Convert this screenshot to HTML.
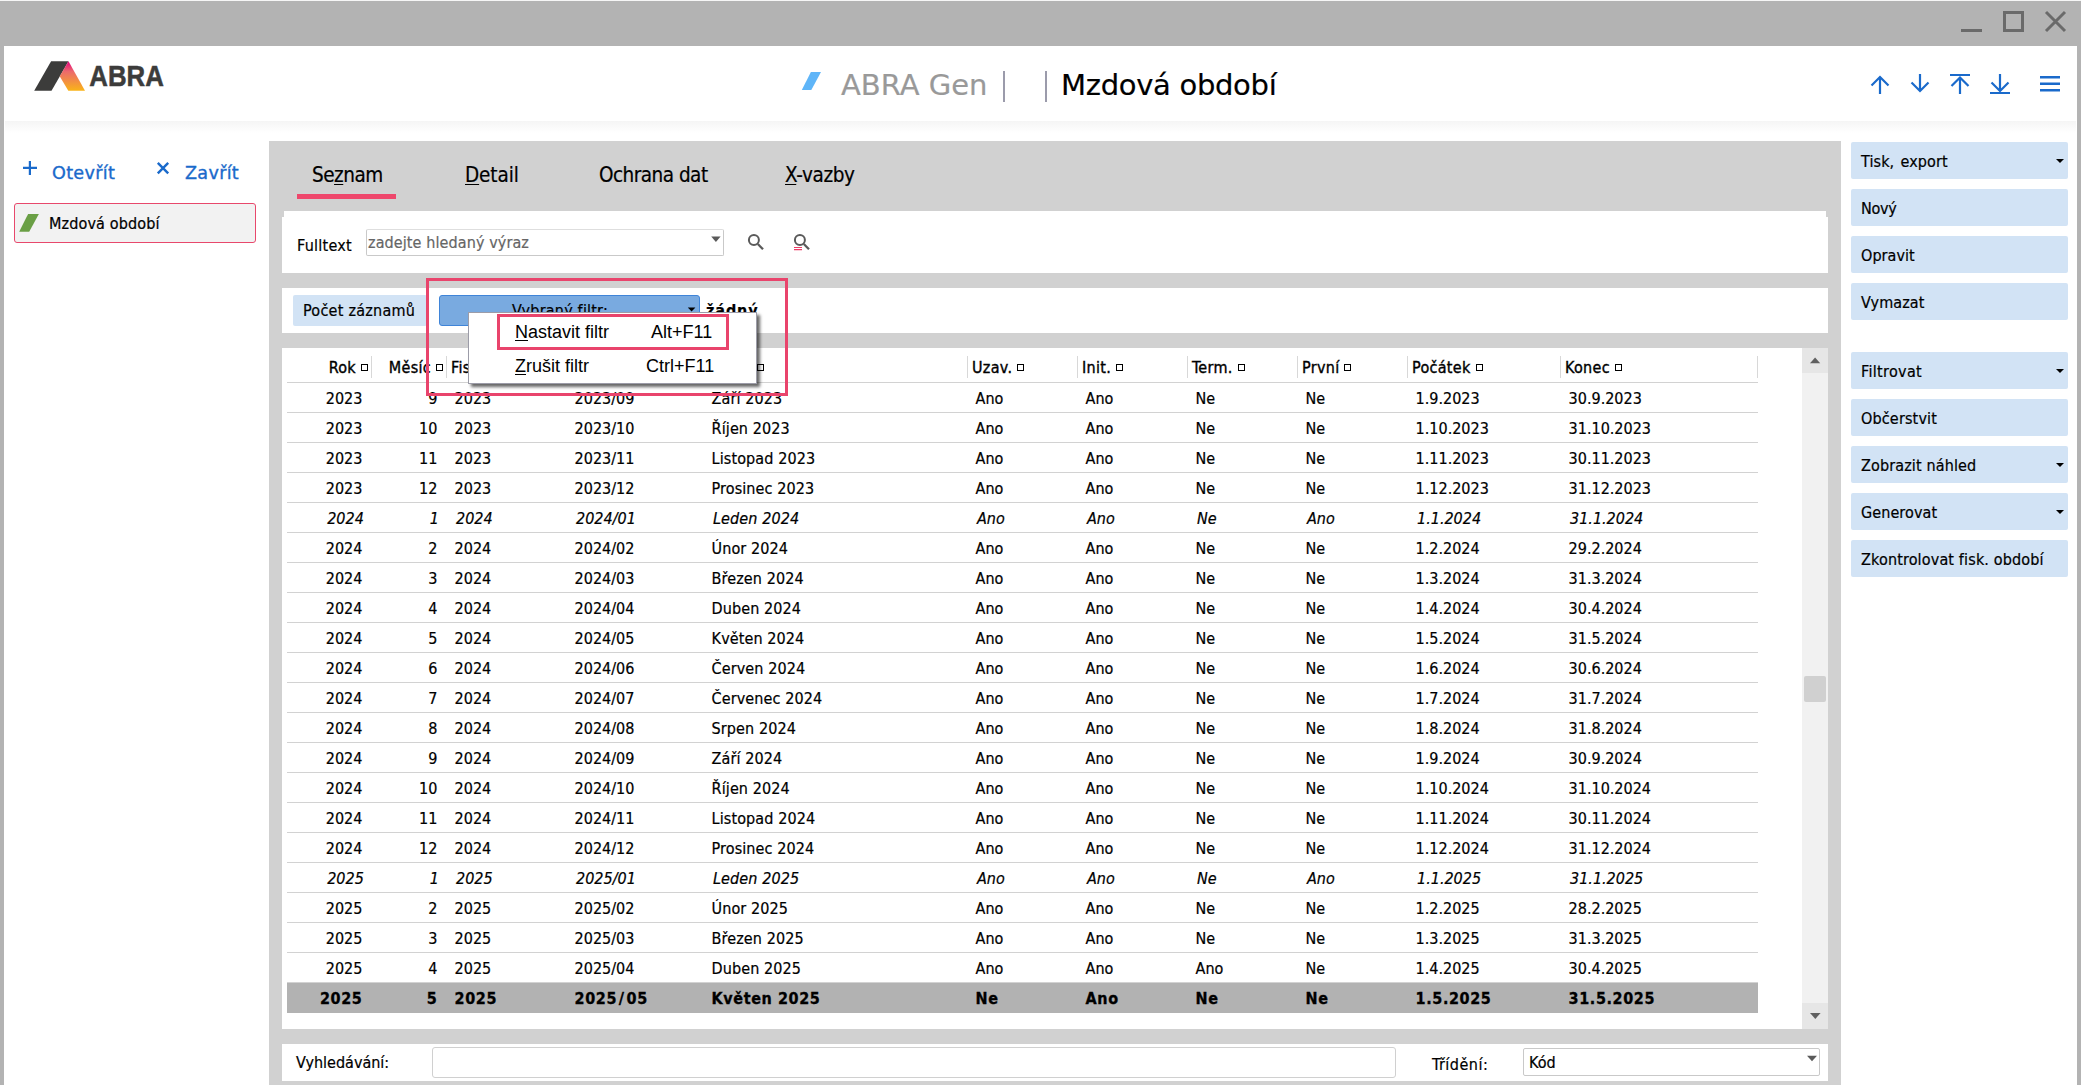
<!DOCTYPE html>
<html lang="cs">
<head>
<meta charset="utf-8">
<title>Mzdová období</title>
<style>
*{box-sizing:border-box;margin:0;padding:0}
html,body{width:2081px;height:1085px;overflow:hidden;background:#fff}
body{position:relative;font-family:"DejaVu Sans Condensed","Liberation Sans",sans-serif;font-size:16px;color:#000;-webkit-text-stroke:0.2px}
.abs{position:absolute}
.t{position:absolute;white-space:nowrap;line-height:1}
u{text-decoration:underline;text-underline-offset:1.5px;text-decoration-thickness:1.3px}
/* window chrome */
#titlebar{left:0;top:0;width:2081px;height:46px;background:#b3b3b3;border-top:1px solid #f6f6f6}
#bl{left:0;top:46px;width:4px;height:1039px;background:#b3b3b3}
#br{left:2077px;top:46px;width:4px;height:1039px;background:#b3b3b3}
#hshadow{left:5px;top:121px;width:2071px;height:12px;background:linear-gradient(#f5f5f5,#f9f9f9 40%,#fff)}
/* center panel */
#center{left:269px;top:141px;width:1572px;height:944px;background:#d1d1d1}
.wp{position:absolute;background:#fff}
.lbtn{position:absolute;background:#d2e3f5;border-radius:2px}
.rb{position:absolute;left:1851px;width:217px;height:37px;background:#d2e3f5;border-radius:2px}
.rb span{position:absolute;left:10px;top:1px;line-height:37px;white-space:nowrap;letter-spacing:-0.05px}
.rb i{position:absolute;right:4.5px;top:16.5px;width:0;height:0;border-left:4px solid transparent;border-right:4px solid transparent;border-top:4px solid #000}
/* grid */
.grid{position:absolute;left:287px;top:348px;width:1471px;height:665px}
.hrow{position:absolute;left:0;top:0;width:1471px;height:35px;border-bottom:1px solid #d2d2d2}
.hc{position:absolute;top:0;height:34px;line-height:34px;padding-left:5px;white-space:nowrap;overflow:hidden}
.hc:before{content:"";position:absolute;left:0;top:8px;width:1px;height:22px;background:#d8d8d8}
.hc:first-child:before{display:none}
.hsep{position:absolute;left:1470px;top:8px;width:1px;height:22px;background:#d8d8d8}
.hc .ht{position:relative;top:3px;-webkit-text-stroke:0.35px #000;letter-spacing:0.3px}
.hc .sq{display:inline-block;width:7px;height:7px;border:1px solid #000;margin-left:5px;position:relative;top:1px}
.hc.r{text-align:right;padding-left:0;padding-right:3px}
.row{position:absolute;left:0;width:1471px;height:30px;border-bottom:1px solid #d2d2d2}
.c{position:absolute;top:1px;height:29px;line-height:30px;padding-left:8.6px;white-space:nowrap;overflow:hidden}
.c.r{text-align:right;padding-left:0;padding-right:8.6px}
.c.n{letter-spacing:0.1px}
.row.it{font-style:italic}
.row.it .c{padding-left:10px}
.row.it .c.r{padding-left:0;padding-right:7.2px}
.row.sel{background:#b2b2b2;font-weight:bold;border-bottom:none;letter-spacing:0.6px;-webkit-text-stroke:0.3px}
.row.sel .c.n{letter-spacing:0.6px}
.sl{padding:0 1.8px}
</style>
</head>
<body>
<div id="titlebar" class="abs"></div>
<div id="bl" class="abs"></div>
<div id="br" class="abs"></div>
<!-- window buttons -->
<svg class="abs" style="left:1955px;top:5px" width="120" height="36" viewBox="1955 5 120 36">
  <rect x="1961" y="29" width="21" height="3" fill="#6a6a6a"/>
  <rect x="2004.5" y="12.5" width="18" height="18" fill="none" stroke="#6a6a6a" stroke-width="3"/>
  <path d="M2046 12 L2065 31 M2065 12 L2046 31" stroke="#6a6a6a" stroke-width="3" fill="none"/>
</svg>
<div id="hshadow" class="abs"></div>

<!-- logo -->
<svg class="abs" style="left:30px;top:56px" width="140" height="40" viewBox="30 56 140 40">
  <defs><linearGradient id="lg" x1="0" y1="0" x2="0" y2="1"><stop offset="0" stop-color="#e5007d"/><stop offset="0.35" stop-color="#ec6a6c"/><stop offset="1" stop-color="#f9b418"/></linearGradient></defs>
  <polygon points="51.1,61.2 68.5,61.2 51.5,90.8 34.2,90.8" fill="#3c3c3b"/>
  <polygon points="68.5,61.2 85,90.8 68.3,90.8 59.7,76.2" fill="url(#lg)"/>
  <text x="89.3" y="86.1" font-family="Liberation Sans, sans-serif" font-weight="bold" font-size="29.2" fill="#3c3c3b" stroke="#3c3c3b" stroke-width="0.5" textLength="74.5" lengthAdjust="spacingAndGlyphs">ABRA</text>
</svg>

<!-- header title -->
<svg class="abs" style="left:800px;top:70px" width="24" height="22" viewBox="800 70 24 22"><polygon points="810.9,72 821,72 811.3,89.9 801.8,89.9" fill="#5fb5f8"/></svg>
<div class="t" id="t_gen" style="left:841px;top:67px;font-family:'DejaVu Sans','Liberation Sans',sans-serif;font-size:29px;line-height:36px;color:#999;letter-spacing:0px">ABRA Gen</div>
<div class="abs" style="left:1003px;top:71px;width:2px;height:31px;background:#9b9bab"></div>
<div class="abs" style="left:1045px;top:71px;width:2px;height:31px;background:#9b9bab"></div>
<div class="t" id="t_title" style="left:1061px;top:67px;font-family:'DejaVu Sans','Liberation Sans',sans-serif;font-size:29px;line-height:36px;color:#000;letter-spacing:-0.3px">Mzdová období</div>

<!-- header nav icons -->
<svg class="abs" style="left:1865px;top:70px" width="200" height="28" viewBox="1865 70 200 28" fill="none" stroke="#1a6acb" stroke-width="2.2">
  <path d="M1880 94 V77 M1871.5 85.5 L1880 77 L1888.5 85.5"/>
  <path d="M1920 74 V91 M1911.5 82.5 L1920 91 L1928.5 82.5"/>
  <path d="M1950 75 H1970 M1960 94 V77.5 M1951.5 86 L1960 77.5 L1968.5 86"/>
  <path d="M1990 93 H2010 M2000 74 V91 M1991.5 82.5 L2000 91 L2008.5 82.5"/>
  <path d="M2040 77.2 H2060 M2040 83.8 H2060 M2040 90.3 H2060" stroke-width="2.4"/>
</svg>

<!-- left panel -->
<svg class="abs" style="left:20px;top:158px" width="160" height="22" viewBox="20 158 160 22" fill="none" stroke="#1a6acb" stroke-width="1.8">
  <path d="M23 167.9 H37 M29.9 161 V175" stroke-width="2.2"/>
  <path d="M157.8 162.8 L168.2 173.4 M168.2 162.8 L157.8 173.4" stroke-width="2.4"/>
</svg>
<div class="t" id="t_open" style="left:52px;top:161px;font-family:'DejaVu Sans','Liberation Sans',sans-serif;font-size:17.6px;line-height:24px;color:#1a6acb;letter-spacing:0.3px;-webkit-text-stroke:0.35px">Otevřít</div>
<div class="t" id="t_close" style="left:185px;top:161px;font-family:'DejaVu Sans','Liberation Sans',sans-serif;font-size:17.6px;line-height:24px;color:#1a6acb;letter-spacing:0.3px;-webkit-text-stroke:0.35px">Zavřít</div>
<div class="abs" style="left:14px;top:203px;width:242px;height:40px;background:#f2f2f2;border:1px solid #e8486c;border-radius:3px"></div>
<svg class="abs" style="left:18px;top:213px" width="22" height="20" viewBox="18 213 22 20"><polygon points="28.1,214 38.85,214 29.2,231.8 19.2,231.8" fill="#6a9f45"/></svg>
<div class="t" id="t_item" style="left:49px;top:212px;line-height:24px;letter-spacing:0.13px">Mzdová období</div>

<!-- center -->
<div id="center" class="abs"></div>
<div class="t" id="tab1" style="letter-spacing:-0.5px;left:312px;top:160px;font-size:20.5px;line-height:30px">Se<u>z</u>nam</div>
<div class="abs" style="left:297px;top:194px;width:99px;height:5px;background:#ee476c"></div>
<div class="t" id="tab2" style="letter-spacing:-0.1px;left:465px;top:160px;font-size:20.5px;line-height:30px"><u>D</u>etail</div>
<div class="t" id="tab3" style="letter-spacing:-0.52px;left:599px;top:160px;font-size:20.5px;line-height:30px">Ochrana dat</div>
<div class="t" id="tab4" style="letter-spacing:-0.38px;left:785px;top:160px;font-size:20.5px;line-height:30px"><u>X</u>-vazby</div>

<!-- fulltext panel -->
<div class="wp" style="left:282px;top:211px;width:1546px;height:62px"></div>
<div class="abs" style="left:282px;top:211px;width:2px;height:6px;background:#d1d1d1"></div><div class="abs" style="left:1826px;top:211px;width:2px;height:6px;background:#d1d1d1"></div>
<div class="t" id="t_full" style="left:297px;top:234px;line-height:24px;letter-spacing:0.25px">Fulltext</div>
<div class="abs" style="left:366px;top:229px;width:358px;height:27px;background:#fff;border:1px solid #c9c9c9;border-top-color:#dedede;border-radius:2px"></div>
<div class="t" id="t_ph" style="left:368px;top:231px;line-height:24px;color:#666;letter-spacing:0.1px">zadejte hledaný výraz</div>
<svg class="abs" style="left:708px;top:230px" width="110" height="24" viewBox="708 230 110 24">
  <polygon points="711.2,236.6 720.6,236.6 715.9,242" fill="#5a5a5a"/>
  <g fill="none" stroke="#5a5a5a" stroke-width="2">
    <circle cx="753.9" cy="240" r="5"/><path d="M757.8 244 L763 249.2" stroke-width="2.3"/>
    <circle cx="799.9" cy="240" r="5"/><path d="M803.8 244 L809 249.2" stroke-width="2.3"/>
  </g>
  <path d="M794 247.5 H802 M794 249.6 H802" stroke="#ee3b66" stroke-width="1.1" fill="none"/>
</svg>

<!-- filter bar -->
<div class="wp" style="left:282px;top:288px;width:1546px;height:45px"></div>
<div class="lbtn" style="left:293px;top:295px;width:134px;height:31px"></div>
<div class="t" id="t_cnt" style="left:303px;top:299px;line-height:24px;letter-spacing:0.25px">Počet záznamů</div>
<div class="abs" style="left:439px;top:295px;width:261px;height:31px;background:#79aae0;border:1px solid #3f84d8;border-radius:3px"></div>
<div class="t" id="t_vf" style="left:512px;top:299px;line-height:24px;letter-spacing:0.2px">Vybraný filtr:</div>
<svg class="abs" style="left:686px;top:305px" width="12" height="8" viewBox="686 305 12 8"><polygon points="687.8,307.5 695.4,307.5 691.6,311.5" fill="#000"/></svg>
<div class="t" id="t_none" style="left:706px;top:299px;line-height:24px;font-weight:bold;letter-spacing:0.9px">žádný</div>

<!-- table panel -->
<div class="wp" style="left:282px;top:348px;width:1546px;height:681px"></div>
<div class="grid">
<div class="hrow">
<div class="hc r" style="left:0px;width:84px"><span class="ht">Rok</span><i class="sq"></i></div>
<div class="hc r" style="left:84px;width:75px"><span class="ht">Měsíc</span><i class="sq"></i></div>
<div class="hc" style="left:159px;width:120px"><span class="ht">Fisk. rok</span><i class="sq"></i></div>
<div class="hc" style="left:279px;width:137px"><span class="ht">Kód</span><i class="sq"></i></div>
<div class="hc" style="left:416px;width:264px"><span class="ht">Název</span><i class="sq" style="margin-left:3px"></i></div>
<div class="hc" style="left:680px;width:110px"><span class="ht">Uzav.</span><i class="sq"></i></div>
<div class="hc" style="left:790px;width:110px"><span class="ht">Init.</span><i class="sq"></i></div>
<div class="hc" style="left:900px;width:110px"><span class="ht">Term.</span><i class="sq"></i></div>
<div class="hc" style="left:1010px;width:110px"><span class="ht">První</span><i class="sq"></i></div>
<div class="hc" style="left:1120px;width:153px"><span class="ht">Počátek</span><i class="sq"></i></div>
<div class="hc" style="left:1273px;width:197px"><span class="ht">Konec</span><i class="sq"></i></div>
<div class="hsep"></div></div>
<div class="row" style="top:35px">
<div class="c r" style="left:0px;width:84px">2023</div>
<div class="c r" style="left:84px;width:75px">9</div>
<div class="c" style="left:159px;width:120px">2023</div>
<div class="c" style="left:279px;width:137px">2023/09</div>
<div class="c n" style="left:416px;width:264px">Září 2023</div>
<div class="c" style="left:680px;width:110px">Ano</div>
<div class="c" style="left:790px;width:110px">Ano</div>
<div class="c" style="left:900px;width:110px">Ne</div>
<div class="c" style="left:1010px;width:110px">Ne</div>
<div class="c" style="left:1120px;width:153px">1.9.2023</div>
<div class="c" style="left:1273px;width:197px">30.9.2023</div>
</div>
<div class="row" style="top:65px">
<div class="c r" style="left:0px;width:84px">2023</div>
<div class="c r" style="left:84px;width:75px">10</div>
<div class="c" style="left:159px;width:120px">2023</div>
<div class="c" style="left:279px;width:137px">2023/10</div>
<div class="c n" style="left:416px;width:264px">Říjen 2023</div>
<div class="c" style="left:680px;width:110px">Ano</div>
<div class="c" style="left:790px;width:110px">Ano</div>
<div class="c" style="left:900px;width:110px">Ne</div>
<div class="c" style="left:1010px;width:110px">Ne</div>
<div class="c" style="left:1120px;width:153px">1.10.2023</div>
<div class="c" style="left:1273px;width:197px">31.10.2023</div>
</div>
<div class="row" style="top:95px">
<div class="c r" style="left:0px;width:84px">2023</div>
<div class="c r" style="left:84px;width:75px">11</div>
<div class="c" style="left:159px;width:120px">2023</div>
<div class="c" style="left:279px;width:137px">2023/11</div>
<div class="c n" style="left:416px;width:264px">Listopad 2023</div>
<div class="c" style="left:680px;width:110px">Ano</div>
<div class="c" style="left:790px;width:110px">Ano</div>
<div class="c" style="left:900px;width:110px">Ne</div>
<div class="c" style="left:1010px;width:110px">Ne</div>
<div class="c" style="left:1120px;width:153px">1.11.2023</div>
<div class="c" style="left:1273px;width:197px">30.11.2023</div>
</div>
<div class="row" style="top:125px">
<div class="c r" style="left:0px;width:84px">2023</div>
<div class="c r" style="left:84px;width:75px">12</div>
<div class="c" style="left:159px;width:120px">2023</div>
<div class="c" style="left:279px;width:137px">2023/12</div>
<div class="c n" style="left:416px;width:264px">Prosinec 2023</div>
<div class="c" style="left:680px;width:110px">Ano</div>
<div class="c" style="left:790px;width:110px">Ano</div>
<div class="c" style="left:900px;width:110px">Ne</div>
<div class="c" style="left:1010px;width:110px">Ne</div>
<div class="c" style="left:1120px;width:153px">1.12.2023</div>
<div class="c" style="left:1273px;width:197px">31.12.2023</div>
</div>
<div class="row it" style="top:155px">
<div class="c r" style="left:0px;width:84px">2024</div>
<div class="c r" style="left:84px;width:75px">1</div>
<div class="c" style="left:159px;width:120px">2024</div>
<div class="c" style="left:279px;width:137px">2024/01</div>
<div class="c n" style="left:416px;width:264px">Leden 2024</div>
<div class="c" style="left:680px;width:110px">Ano</div>
<div class="c" style="left:790px;width:110px">Ano</div>
<div class="c" style="left:900px;width:110px">Ne</div>
<div class="c" style="left:1010px;width:110px">Ano</div>
<div class="c" style="left:1120px;width:153px">1.1.2024</div>
<div class="c" style="left:1273px;width:197px">31.1.2024</div>
</div>
<div class="row" style="top:185px">
<div class="c r" style="left:0px;width:84px">2024</div>
<div class="c r" style="left:84px;width:75px">2</div>
<div class="c" style="left:159px;width:120px">2024</div>
<div class="c" style="left:279px;width:137px">2024/02</div>
<div class="c n" style="left:416px;width:264px">Únor 2024</div>
<div class="c" style="left:680px;width:110px">Ano</div>
<div class="c" style="left:790px;width:110px">Ano</div>
<div class="c" style="left:900px;width:110px">Ne</div>
<div class="c" style="left:1010px;width:110px">Ne</div>
<div class="c" style="left:1120px;width:153px">1.2.2024</div>
<div class="c" style="left:1273px;width:197px">29.2.2024</div>
</div>
<div class="row" style="top:215px">
<div class="c r" style="left:0px;width:84px">2024</div>
<div class="c r" style="left:84px;width:75px">3</div>
<div class="c" style="left:159px;width:120px">2024</div>
<div class="c" style="left:279px;width:137px">2024/03</div>
<div class="c n" style="left:416px;width:264px">Březen 2024</div>
<div class="c" style="left:680px;width:110px">Ano</div>
<div class="c" style="left:790px;width:110px">Ano</div>
<div class="c" style="left:900px;width:110px">Ne</div>
<div class="c" style="left:1010px;width:110px">Ne</div>
<div class="c" style="left:1120px;width:153px">1.3.2024</div>
<div class="c" style="left:1273px;width:197px">31.3.2024</div>
</div>
<div class="row" style="top:245px">
<div class="c r" style="left:0px;width:84px">2024</div>
<div class="c r" style="left:84px;width:75px">4</div>
<div class="c" style="left:159px;width:120px">2024</div>
<div class="c" style="left:279px;width:137px">2024/04</div>
<div class="c n" style="left:416px;width:264px">Duben 2024</div>
<div class="c" style="left:680px;width:110px">Ano</div>
<div class="c" style="left:790px;width:110px">Ano</div>
<div class="c" style="left:900px;width:110px">Ne</div>
<div class="c" style="left:1010px;width:110px">Ne</div>
<div class="c" style="left:1120px;width:153px">1.4.2024</div>
<div class="c" style="left:1273px;width:197px">30.4.2024</div>
</div>
<div class="row" style="top:275px">
<div class="c r" style="left:0px;width:84px">2024</div>
<div class="c r" style="left:84px;width:75px">5</div>
<div class="c" style="left:159px;width:120px">2024</div>
<div class="c" style="left:279px;width:137px">2024/05</div>
<div class="c n" style="left:416px;width:264px">Květen 2024</div>
<div class="c" style="left:680px;width:110px">Ano</div>
<div class="c" style="left:790px;width:110px">Ano</div>
<div class="c" style="left:900px;width:110px">Ne</div>
<div class="c" style="left:1010px;width:110px">Ne</div>
<div class="c" style="left:1120px;width:153px">1.5.2024</div>
<div class="c" style="left:1273px;width:197px">31.5.2024</div>
</div>
<div class="row" style="top:305px">
<div class="c r" style="left:0px;width:84px">2024</div>
<div class="c r" style="left:84px;width:75px">6</div>
<div class="c" style="left:159px;width:120px">2024</div>
<div class="c" style="left:279px;width:137px">2024/06</div>
<div class="c n" style="left:416px;width:264px">Červen 2024</div>
<div class="c" style="left:680px;width:110px">Ano</div>
<div class="c" style="left:790px;width:110px">Ano</div>
<div class="c" style="left:900px;width:110px">Ne</div>
<div class="c" style="left:1010px;width:110px">Ne</div>
<div class="c" style="left:1120px;width:153px">1.6.2024</div>
<div class="c" style="left:1273px;width:197px">30.6.2024</div>
</div>
<div class="row" style="top:335px">
<div class="c r" style="left:0px;width:84px">2024</div>
<div class="c r" style="left:84px;width:75px">7</div>
<div class="c" style="left:159px;width:120px">2024</div>
<div class="c" style="left:279px;width:137px">2024/07</div>
<div class="c n" style="left:416px;width:264px">Červenec 2024</div>
<div class="c" style="left:680px;width:110px">Ano</div>
<div class="c" style="left:790px;width:110px">Ano</div>
<div class="c" style="left:900px;width:110px">Ne</div>
<div class="c" style="left:1010px;width:110px">Ne</div>
<div class="c" style="left:1120px;width:153px">1.7.2024</div>
<div class="c" style="left:1273px;width:197px">31.7.2024</div>
</div>
<div class="row" style="top:365px">
<div class="c r" style="left:0px;width:84px">2024</div>
<div class="c r" style="left:84px;width:75px">8</div>
<div class="c" style="left:159px;width:120px">2024</div>
<div class="c" style="left:279px;width:137px">2024/08</div>
<div class="c n" style="left:416px;width:264px">Srpen 2024</div>
<div class="c" style="left:680px;width:110px">Ano</div>
<div class="c" style="left:790px;width:110px">Ano</div>
<div class="c" style="left:900px;width:110px">Ne</div>
<div class="c" style="left:1010px;width:110px">Ne</div>
<div class="c" style="left:1120px;width:153px">1.8.2024</div>
<div class="c" style="left:1273px;width:197px">31.8.2024</div>
</div>
<div class="row" style="top:395px">
<div class="c r" style="left:0px;width:84px">2024</div>
<div class="c r" style="left:84px;width:75px">9</div>
<div class="c" style="left:159px;width:120px">2024</div>
<div class="c" style="left:279px;width:137px">2024/09</div>
<div class="c n" style="left:416px;width:264px">Září 2024</div>
<div class="c" style="left:680px;width:110px">Ano</div>
<div class="c" style="left:790px;width:110px">Ano</div>
<div class="c" style="left:900px;width:110px">Ne</div>
<div class="c" style="left:1010px;width:110px">Ne</div>
<div class="c" style="left:1120px;width:153px">1.9.2024</div>
<div class="c" style="left:1273px;width:197px">30.9.2024</div>
</div>
<div class="row" style="top:425px">
<div class="c r" style="left:0px;width:84px">2024</div>
<div class="c r" style="left:84px;width:75px">10</div>
<div class="c" style="left:159px;width:120px">2024</div>
<div class="c" style="left:279px;width:137px">2024/10</div>
<div class="c n" style="left:416px;width:264px">Říjen 2024</div>
<div class="c" style="left:680px;width:110px">Ano</div>
<div class="c" style="left:790px;width:110px">Ano</div>
<div class="c" style="left:900px;width:110px">Ne</div>
<div class="c" style="left:1010px;width:110px">Ne</div>
<div class="c" style="left:1120px;width:153px">1.10.2024</div>
<div class="c" style="left:1273px;width:197px">31.10.2024</div>
</div>
<div class="row" style="top:455px">
<div class="c r" style="left:0px;width:84px">2024</div>
<div class="c r" style="left:84px;width:75px">11</div>
<div class="c" style="left:159px;width:120px">2024</div>
<div class="c" style="left:279px;width:137px">2024/11</div>
<div class="c n" style="left:416px;width:264px">Listopad 2024</div>
<div class="c" style="left:680px;width:110px">Ano</div>
<div class="c" style="left:790px;width:110px">Ano</div>
<div class="c" style="left:900px;width:110px">Ne</div>
<div class="c" style="left:1010px;width:110px">Ne</div>
<div class="c" style="left:1120px;width:153px">1.11.2024</div>
<div class="c" style="left:1273px;width:197px">30.11.2024</div>
</div>
<div class="row" style="top:485px">
<div class="c r" style="left:0px;width:84px">2024</div>
<div class="c r" style="left:84px;width:75px">12</div>
<div class="c" style="left:159px;width:120px">2024</div>
<div class="c" style="left:279px;width:137px">2024/12</div>
<div class="c n" style="left:416px;width:264px">Prosinec 2024</div>
<div class="c" style="left:680px;width:110px">Ano</div>
<div class="c" style="left:790px;width:110px">Ano</div>
<div class="c" style="left:900px;width:110px">Ne</div>
<div class="c" style="left:1010px;width:110px">Ne</div>
<div class="c" style="left:1120px;width:153px">1.12.2024</div>
<div class="c" style="left:1273px;width:197px">31.12.2024</div>
</div>
<div class="row it" style="top:515px">
<div class="c r" style="left:0px;width:84px">2025</div>
<div class="c r" style="left:84px;width:75px">1</div>
<div class="c" style="left:159px;width:120px">2025</div>
<div class="c" style="left:279px;width:137px">2025/01</div>
<div class="c n" style="left:416px;width:264px">Leden 2025</div>
<div class="c" style="left:680px;width:110px">Ano</div>
<div class="c" style="left:790px;width:110px">Ano</div>
<div class="c" style="left:900px;width:110px">Ne</div>
<div class="c" style="left:1010px;width:110px">Ano</div>
<div class="c" style="left:1120px;width:153px">1.1.2025</div>
<div class="c" style="left:1273px;width:197px">31.1.2025</div>
</div>
<div class="row" style="top:545px">
<div class="c r" style="left:0px;width:84px">2025</div>
<div class="c r" style="left:84px;width:75px">2</div>
<div class="c" style="left:159px;width:120px">2025</div>
<div class="c" style="left:279px;width:137px">2025/02</div>
<div class="c n" style="left:416px;width:264px">Únor 2025</div>
<div class="c" style="left:680px;width:110px">Ano</div>
<div class="c" style="left:790px;width:110px">Ano</div>
<div class="c" style="left:900px;width:110px">Ne</div>
<div class="c" style="left:1010px;width:110px">Ne</div>
<div class="c" style="left:1120px;width:153px">1.2.2025</div>
<div class="c" style="left:1273px;width:197px">28.2.2025</div>
</div>
<div class="row" style="top:575px">
<div class="c r" style="left:0px;width:84px">2025</div>
<div class="c r" style="left:84px;width:75px">3</div>
<div class="c" style="left:159px;width:120px">2025</div>
<div class="c" style="left:279px;width:137px">2025/03</div>
<div class="c n" style="left:416px;width:264px">Březen 2025</div>
<div class="c" style="left:680px;width:110px">Ano</div>
<div class="c" style="left:790px;width:110px">Ano</div>
<div class="c" style="left:900px;width:110px">Ne</div>
<div class="c" style="left:1010px;width:110px">Ne</div>
<div class="c" style="left:1120px;width:153px">1.3.2025</div>
<div class="c" style="left:1273px;width:197px">31.3.2025</div>
</div>
<div class="row" style="top:605px">
<div class="c r" style="left:0px;width:84px">2025</div>
<div class="c r" style="left:84px;width:75px">4</div>
<div class="c" style="left:159px;width:120px">2025</div>
<div class="c" style="left:279px;width:137px">2025/04</div>
<div class="c n" style="left:416px;width:264px">Duben 2025</div>
<div class="c" style="left:680px;width:110px">Ano</div>
<div class="c" style="left:790px;width:110px">Ano</div>
<div class="c" style="left:900px;width:110px">Ano</div>
<div class="c" style="left:1010px;width:110px">Ne</div>
<div class="c" style="left:1120px;width:153px">1.4.2025</div>
<div class="c" style="left:1273px;width:197px">30.4.2025</div>
</div>
<div class="row sel" style="top:635px">
<div class="c r" style="left:0px;width:84px">2025</div>
<div class="c r" style="left:84px;width:75px">5</div>
<div class="c" style="left:159px;width:120px">2025</div>
<div class="c" style="left:279px;width:137px">2025<span class="sl">/</span>05</div>
<div class="c n" style="left:416px;width:264px">Květen 2025</div>
<div class="c" style="left:680px;width:110px">Ne</div>
<div class="c" style="left:790px;width:110px">Ano</div>
<div class="c" style="left:900px;width:110px">Ne</div>
<div class="c" style="left:1010px;width:110px">Ne</div>
<div class="c" style="left:1120px;width:153px">1.5.2025</div>
<div class="c" style="left:1273px;width:197px">31.5.2025</div>
</div>
</div>
<!-- scrollbar -->
<div class="abs" style="left:1802px;top:348px;width:26px;height:681px;background:#f1f1f1"></div>
<div class="abs" style="left:1802px;top:348px;width:26px;height:25px;background:#e6e6e6"></div>
<div class="abs" style="left:1802px;top:1003px;width:26px;height:26px;background:#e6e6e6"></div>
<div class="abs" style="left:1804px;top:676px;width:22px;height:26px;background:#d0d0d0;border-radius:2px"></div>
<svg class="abs" style="left:1808px;top:355px" width="14" height="10" viewBox="1808 355 14 10"><polygon points="1810,363.2 1820.2,363.2 1815.1,357.4" fill="#606060"/></svg>
<svg class="abs" style="left:1808px;top:1011px" width="14" height="10" viewBox="1808 1011 14 10"><polygon points="1810,1013 1820.6,1013 1815.3,1018.9" fill="#606060"/></svg>

<!-- bottom panel -->
<div class="wp" style="left:282px;top:1044px;width:1546px;height:37px"></div>
<div class="t" id="t_vyhl" style="left:296px;top:1051px;line-height:24px">Vyhledávání:</div>
<div class="abs" style="left:432px;top:1047px;width:964px;height:31px;background:#fff;border:1px solid #d0d0d0;border-radius:3px"></div>
<div class="t" id="t_trid" style="left:1432px;top:1053px;line-height:24px;letter-spacing:0.5px">Třídění:</div>
<div class="abs" style="left:1523px;top:1048px;width:297px;height:28px;background:#fff;border:1px solid #c9c9c9;border-radius:2px"></div>
<div class="t" id="t_kod" style="left:1529px;top:1051px;line-height:24px">Kód</div>
<svg class="abs" style="left:1805px;top:1054px" width="14" height="10" viewBox="1805 1054 14 10"><polygon points="1807,1055.8 1817,1055.8 1812,1061.2" fill="#5a5a5a"/></svg>

<!-- right buttons -->
<div class="rb" style="top:142px"><span style="word-spacing:1.5px;letter-spacing:0.12px">Tisk, export</span><i></i></div>
<div class="rb" style="top:189px"><span style="letter-spacing:-0.3px">Nový</span></div>
<div class="rb" style="top:236px"><span style="letter-spacing:0.05px">Opravit</span></div>
<div class="rb" style="top:283px"><span style="letter-spacing:0.1px">Vymazat</span></div>
<div class="rb" style="top:352px"><span style="letter-spacing:0.33px">Filtrovat</span><i></i></div>
<div class="rb" style="top:399px"><span style="letter-spacing:0.16px">Občerstvit</span></div>
<div class="rb" style="top:446px"><span style="letter-spacing:0.13px">Zobrazit náhled</span><i></i></div>
<div class="rb" style="top:493px"><span style="letter-spacing:0.09px">Generovat</span><i></i></div>
<div class="rb" style="top:540px"><span style="letter-spacing:0.15px">Zkontrolovat fisk. období</span></div>

<!-- popup menu and highlight frames -->
<div class="abs" style="left:468px;top:312px;width:289px;height:72px;background:#fff;border:1px solid #9c9ca8;box-shadow:3px 3px 3px rgba(0,0,0,.6)"></div>
<div class="t" id="m1" style="-webkit-text-stroke:0;left:515px;top:320px;font-family:'Liberation Sans',sans-serif;font-size:18px;line-height:24px"><u>N</u>astavit filtr</div>
<div class="t" id="m1k" style="-webkit-text-stroke:0;left:651px;top:320px;font-family:'Liberation Sans',sans-serif;font-size:18px;line-height:24px">Alt+F11</div>
<div class="t" id="m2" style="-webkit-text-stroke:0;left:515px;top:354px;font-family:'Liberation Sans',sans-serif;font-size:18px;line-height:24px"><u>Z</u>rušit filtr</div>
<div class="t" id="m2k" style="-webkit-text-stroke:0;left:646px;top:354px;font-family:'Liberation Sans',sans-serif;font-size:18px;line-height:24px">Ctrl+F11</div>
<div class="abs" style="left:497px;top:314px;width:232px;height:36px;border:3px solid #e9446c"></div>
<div class="abs" style="left:426px;top:278px;width:362px;height:118px;border:3px solid #e9446c"></div>
</body>
</html>
